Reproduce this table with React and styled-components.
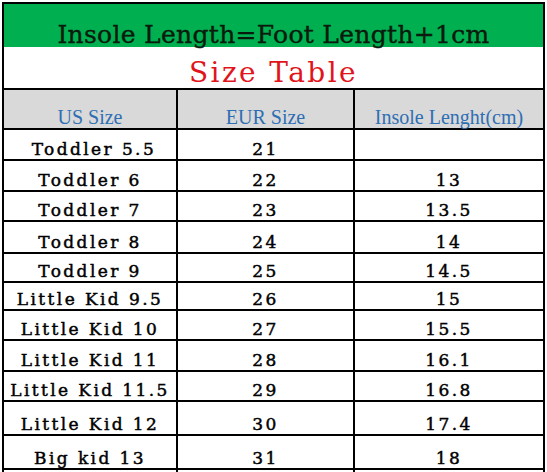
import styled, { createGlobalStyle } from 'styled-components';

const GlobalStyle = createGlobalStyle`
  html, body {
    margin: 0;
    padding: 0;
    background: #ffffff;
  }
`;

const rows = [
  { us: ' Toddler 5.5', eur: '21', insole: '', h: 29 },
  { us: 'Toddler 6', eur: '22', insole: '13', h: 29 },
  { us: 'Toddler 7', eur: '23', insole: '13.5', h: 28 },
  { us: 'Toddler 8', eur: '24', insole: '14', h: 30 },
  { us: 'Toddler 9', eur: '25', insole: '14.5', h: 27 },
  { us: 'Little Kid 9.5', eur: '26', insole: '15', h: 26 },
  { us: 'Little Kid 10', eur: '27', insole: '15.5', h: 28 },
  { us: 'Little Kid 11', eur: '28', insole: '16.1', h: 29 },
  { us: 'Little Kid 11.5', eur: '29', insole: '16.8', h: 28 },
  { us: 'Little Kid 12', eur: '30', insole: '17.4', h: 32 },
  { us: 'Big kid 13', eur: '31', insole: '18', h: 32 },
  { us: '', eur: '', insole: '', h: 30 },
];

function App() {
  return (
    <>
      <GlobalStyle />
      <S.Sheet>
        <S.Banner>Insole Length=Foot Length+1cm</S.Banner>
        <S.Caption>Size Table</S.Caption>
        <S.Row $h={38} $head>
          <S.HeadCell>US Size</S.HeadCell>
          <S.HeadCell>EUR Size</S.HeadCell>
          <S.HeadCell>Insole Lenght(cm)</S.HeadCell>
        </S.Row>
        {rows.map((r, i) => (
          <S.Row key={i} $h={r.h}>
            <S.Cell>{r.us}</S.Cell>
            <S.Cell>{r.eur}</S.Cell>
            <S.Cell>{r.insole}</S.Cell>
          </S.Row>
        ))}
      </S.Sheet>
    </>
  );
}

export default App;

const S = {
  Sheet: styled.div`
    margin: 2px 0 0 2px;
    width: 539px;
    border: 2px solid #000;
    border-bottom: none;
    display: flex;
    flex-direction: column;
  `,
  Banner: styled.div`
    height: 43px;
    background-color: #00b050;
    color: #0a1a0c;
    -webkit-text-stroke: 0.4px #0a1a0c;
    font-family: 'DejaVu Serif', serif;
    font-size: 25px;
    letter-spacing: 0.3px;
    display: flex;
    align-items: flex-end;
    justify-content: center;
    line-height: 1;
    padding-bottom: 0;
    box-sizing: border-box;
  `,
  Caption: styled.div`
    height: 43px;
    border-bottom: 2px solid #000;
    color: #e2141b;
    font-family: 'DejaVu Serif', serif;
    font-size: 28px;
    letter-spacing: 2.4px;
    display: flex;
    align-items: flex-end;
    justify-content: center;
    line-height: 1;
    padding-bottom: 1px;
    box-sizing: border-box;
  `,
  Row: styled.div`
    display: grid;
    grid-template-columns: 174px 177px 1fr;
    height: ${(p) => p.$h + 2}px;
    box-sizing: border-box;
    border-bottom: 2px solid #000;
    background-color: ${(p) => (p.$head ? '#d9d9d9' : '#ffffff')};
  `,
  HeadCell: styled.div`
    display: flex;
    align-items: flex-end;
    justify-content: center;
    padding-bottom: 1px;
    color: #2e6fb4;
    font-family: 'Liberation Serif', serif;
    font-size: 20px;
    line-height: 1;
    border-right: 2px solid #000;
    &:last-child {
      border-right: none;
    }
  `,
  Cell: styled.div`
    display: flex;
    align-items: flex-end;
    justify-content: center;
    padding-bottom: 1.5px;
    color: #000;
    -webkit-text-stroke: 0.45px #000;
    font-family: 'DejaVu Serif', serif;
    font-size: 17px;
    letter-spacing: 2.4px;
    line-height: 1;
    white-space: pre;
    border-right: 2px solid #000;
    &:last-child {
      border-right: none;
    }
  `,
};
